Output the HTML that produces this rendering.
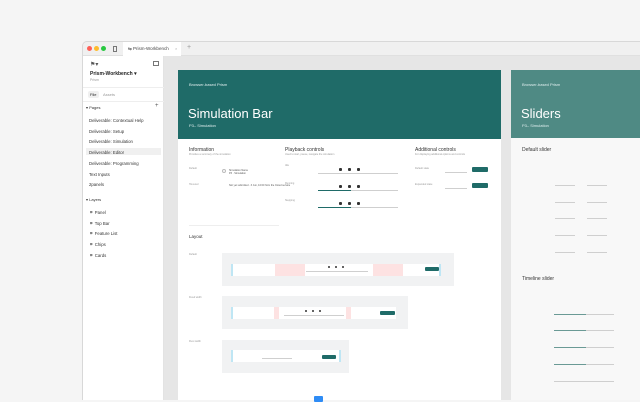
<!DOCTYPE html>
<html><head><style>
*{margin:0;padding:0;box-sizing:border-box}
body{width:640px;height:400px;overflow:hidden;background:#f5f5f5;font-family:"Liberation Sans",sans-serif;position:relative}
.a{position:absolute}
.t{font-size:4.5px;color:#333;position:absolute;white-space:nowrap}
.g{font-size:2.5px;color:#999;position:absolute;white-space:nowrap}
.ln{position:absolute;height:1px;background:#cfcfcf}
.d{position:absolute;width:3px;height:3px;background:#333;border-radius:1px}
.btn{position:absolute;background:#1f6b68;border-radius:1px}
</style></head><body>
<div class="a" style="left:82px;top:41px;width:558px;height:359px;background:#e6e6e6;border-left:1px solid #d8d8d8;border-top:1px solid #d8d8d8;border-radius:5px 0 0 0;overflow:hidden">
 <div class="a" style="left:0;top:0;width:558px;height:14px;background:#f0f0f0;border-bottom:1px solid #e0e0e0"></div>
 <div class="a" style="left:4px;top:4px;width:5px;height:5px;border-radius:50%;background:#fe5f57"></div>
 <div class="a" style="left:11px;top:4px;width:5px;height:5px;border-radius:50%;background:#febc2e"></div>
 <div class="a" style="left:18px;top:4px;width:5px;height:5px;border-radius:50%;background:#28c840"></div>
 <div class="a" style="left:30px;top:4px;width:4px;height:6px;border:1px solid #777"></div>
 <div class="a" style="left:40px;top:0;width:58px;height:14px;background:#fff"></div>
 <div class="a" style="left:45px;top:4px;font-size:4.5px;color:#444">⇆ Prism-Workbench</div>
 <div class="a" style="left:92px;top:4px;font-size:4px;color:#aaa">×</div>
 <div class="a" style="left:104px;top:2px;font-size:7px;color:#999">+</div>
 <div class="a" style="left:0;top:14px;width:81px;height:345px;background:#fff;border-right:1px solid #e3e3e3"></div>
 <div class="a" style="left:7px;top:19px;font-size:6px;color:#555">⚑▾</div>
 <div class="a" style="left:70px;top:19px;width:6px;height:5px;border:1px solid #777"></div>
 <div class="a" style="left:7px;top:29px;font-size:5px;color:#222;font-weight:bold">Prism-Workbench ▾</div>
 <div class="a" style="left:7px;top:36px;font-size:3.5px;color:#999">Prism</div>
 <div class="a" style="left:0;top:45px;width:81px;height:1px;background:#eee"></div>
 <div class="a" style="left:5px;top:49px;width:11px;height:7px;background:#f0f0f0;border-radius:2px"></div>
 <div class="a" style="left:7px;top:50px;font-size:4px;color:#222">File</div>
 <div class="a" style="left:20px;top:50px;font-size:4px;color:#999">Assets</div>
 <div class="a" style="left:0;top:59px;width:81px;height:1px;background:#eee"></div>
 <div class="a" style="left:3px;top:63px;font-size:4px;color:#333">▾ Pages</div>
 <div class="a" style="left:72px;top:61px;font-size:6px;color:#555">+</div>
 <div class="a" style="left:3px;top:106px;width:75px;height:7px;background:#f0f0f0"></div>
 <div class="a" style="left:6px;top:74px;font-size:4.3px;color:#333;line-height:10.7px">Deliverable: Contextual Help<br>Deliverable: Setup<br>Deliverable: Simulation<br>Deliverable: Editor<br>Deliverable: Programming<br>Text Inputs<br>2panels</div>
 <div class="a" style="left:3px;top:155px;font-size:4px;color:#333">▾ Layers</div>
 <div class="a" style="left:7px;top:166px;font-size:4.3px;color:#333;line-height:10.7px">⌗&nbsp; Panel<br>⌗&nbsp; Top Bar<br>⌗&nbsp; Feature List<br>⌗&nbsp; Chips<br>⌗&nbsp; Cards</div>
</div>

<!-- frame 1 -->
<div class="a" style="left:178px;top:70px;width:323px;height:330px;background:#fff"></div>
<div class="a" style="left:178px;top:70px;width:323px;height:69px;background:#1f6b68"></div>
<div class="a" style="left:189px;top:82px;font-size:4px;color:#dfeeee">Browser-based Prism</div>
<div class="a" style="left:188px;top:106px;font-size:13px;color:#fff">Simulation Bar</div>
<div class="a" style="left:189px;top:123px;font-size:4px;color:#dfeeee">P3– Simulation</div>

<div class="t" style="left:189px;top:147px;font-size:5px">Information</div>
<div class="g" style="left:189px;top:153px">Provides a summary of the simulation</div>
<div class="g" style="left:189px;top:167px">Default</div>
<div class="g" style="left:189px;top:183px">Hovered</div>
<div class="a" style="left:222px;top:169px;width:4px;height:4px;border:1px solid #bbb;border-radius:50%"></div>
<div class="g" style="left:229px;top:169px;color:#555">Simulation Name<br>P3 · Simulation</div>
<div class="g" style="left:229px;top:184px;color:#555">Not yet submitted · 3 Jun, 10:00 from the Cloud service</div>
<div class="ln" style="left:189px;top:225px;width:90px;background:#eee"></div>

<div class="t" style="left:285px;top:147px;font-size:5px">Playback controls</div>
<div class="g" style="left:285px;top:153px">Used to start, pause, navigate the simulation</div>
<div class="g" style="left:285px;top:164px">Idle</div><div class="g" style="left:285px;top:182px">Running</div><div class="g" style="left:285px;top:199px">Stepping</div>
<div class="ln" style="left:318px;top:173px;width:80px"></div>
<div class="ln" style="left:318px;top:190px;width:80px"></div><div class="a" style="left:318px;top:190px;width:33px;height:1px;background:#1f6b68"></div>
<div class="ln" style="left:318px;top:207px;width:80px"></div><div class="a" style="left:318px;top:207px;width:33px;height:1px;background:#1f6b68"></div>
<div class="d" style="left:339px;top:168px"></div><div class="d" style="left:348px;top:168px"></div><div class="d" style="left:357px;top:168px"></div>
<div class="d" style="left:339px;top:185px"></div><div class="d" style="left:348px;top:185px"></div><div class="d" style="left:357px;top:185px"></div>
<div class="d" style="left:339px;top:202px"></div><div class="d" style="left:348px;top:202px"></div><div class="d" style="left:357px;top:202px"></div>

<div class="t" style="left:415px;top:147px;font-size:5px">Additional controls</div>
<div class="g" style="left:415px;top:153px">For displaying additional options and controls</div>
<div class="g" style="left:415px;top:167px">Default state</div><div class="g" style="left:415px;top:183px">Expanded state</div>
<div class="btn" style="left:472px;top:167px;width:16px;height:5px"></div>
<div class="btn" style="left:472px;top:183px;width:16px;height:5px"></div>
<div class="ln" style="left:445px;top:172px;width:22px"></div><div class="ln" style="left:445px;top:188px;width:22px"></div>

<div class="t" style="left:189px;top:234px">Layout</div>
<div class="g" style="left:189px;top:253px">Default</div><div class="g" style="left:189px;top:296px">Fixed width</div><div class="g" style="left:189px;top:340px">Flexi width</div>
<div class="a" style="left:222px;top:253px;width:232px;height:33px;background:#f1f2f3"></div>
<div class="a" style="left:231px;top:264px;width:210px;height:12px;background:#fff"></div>
<div class="a" style="left:275px;top:264px;width:30px;height:12px;background:#fde2e2"></div>
<div class="a" style="left:373px;top:264px;width:30px;height:12px;background:#fde2e2"></div>
<div class="a" style="left:231px;top:264px;width:2px;height:12px;background:#bfe6f4"></div>
<div class="a" style="left:439px;top:264px;width:2px;height:12px;background:#bfe6f4"></div>
<div class="btn" style="left:425px;top:267px;width:14px;height:4px"></div>
<div class="ln" style="left:306px;top:271px;width:62px"></div>
<div class="d" style="left:328px;top:266px;width:2px;height:2px"></div><div class="d" style="left:335px;top:266px;width:2px;height:2px"></div><div class="d" style="left:342px;top:266px;width:2px;height:2px"></div>

<div class="a" style="left:222px;top:296px;width:186px;height:33px;background:#f1f2f3"></div>
<div class="a" style="left:231px;top:307px;width:165px;height:12px;background:#fff"></div>
<div class="a" style="left:274px;top:307px;width:5px;height:12px;background:#fde2e2"></div>
<div class="a" style="left:346px;top:307px;width:5px;height:12px;background:#fde2e2"></div>
<div class="a" style="left:231px;top:307px;width:2px;height:12px;background:#bfe6f4"></div>
<div class="btn" style="left:380px;top:311px;width:15px;height:4px"></div>
<div class="ln" style="left:284px;top:315px;width:60px"></div>
<div class="d" style="left:305px;top:310px;width:2px;height:2px"></div><div class="d" style="left:312px;top:310px;width:2px;height:2px"></div><div class="d" style="left:319px;top:310px;width:2px;height:2px"></div>

<div class="a" style="left:222px;top:340px;width:127px;height:33px;background:#f1f2f3"></div>
<div class="a" style="left:231px;top:350px;width:110px;height:12px;background:#fff"></div>
<div class="a" style="left:231px;top:350px;width:2px;height:12px;background:#bfe6f4"></div>
<div class="a" style="left:339px;top:350px;width:2px;height:12px;background:#bfe6f4"></div>
<div class="btn" style="left:322px;top:355px;width:14px;height:4px"></div>
<div class="ln" style="left:262px;top:358px;width:30px"></div>

<div class="a" style="left:314px;top:396px;width:9px;height:6px;background:#2f8cf5;border-radius:1px"></div>

<!-- frame 2 -->
<div class="a" style="left:511px;top:70px;width:129px;height:330px;background:#f8f8f8"></div>
<div class="a" style="left:511px;top:70px;width:129px;height:68px;background:#4f8a84"></div>
<div class="a" style="left:522px;top:82px;font-size:4px;color:#dfeeee">Browser-based Prism</div>
<div class="a" style="left:521px;top:106px;font-size:13px;color:#fff">Sliders</div>
<div class="a" style="left:522px;top:123px;font-size:4px;color:#dfeeee">P3– Simulation</div>
<div class="t" style="left:522px;top:147px;font-size:5px">Default slider</div>
<div class="t" style="left:522px;top:276px;font-size:5px">Timeline slider</div>
<div class="ln" style="left:555px;top:185px;width:20px"></div><div class="ln" style="left:587px;top:185px;width:20px"></div>
<div class="ln" style="left:555px;top:202px;width:20px"></div><div class="ln" style="left:587px;top:202px;width:20px"></div>
<div class="ln" style="left:555px;top:218px;width:20px"></div><div class="ln" style="left:587px;top:218px;width:20px"></div>
<div class="ln" style="left:555px;top:235px;width:20px"></div><div class="ln" style="left:587px;top:235px;width:20px"></div>
<div class="ln" style="left:555px;top:252px;width:20px"></div><div class="ln" style="left:587px;top:252px;width:20px"></div>
<div class="ln" style="left:554px;top:314px;width:60px"></div><div class="a" style="left:554px;top:314px;width:32px;height:1px;background:#6a9a95"></div>
<div class="ln" style="left:554px;top:330px;width:60px"></div><div class="a" style="left:554px;top:330px;width:32px;height:1px;background:#6a9a95"></div>
<div class="ln" style="left:554px;top:347px;width:60px"></div><div class="a" style="left:554px;top:347px;width:32px;height:1px;background:#6a9a95"></div>
<div class="ln" style="left:554px;top:364px;width:60px"></div><div class="a" style="left:554px;top:364px;width:32px;height:1px;background:#6a9a95"></div>
<div class="ln" style="left:554px;top:381px;width:60px"></div>
</body></html>
